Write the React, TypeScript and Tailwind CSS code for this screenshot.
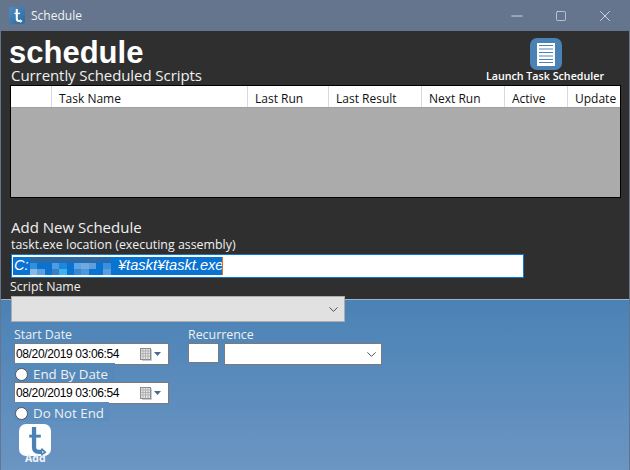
import React from 'react';
import { ChevronDown, Minus, Square, X } from 'lucide-react';

const columns = [
  { name: '', width: 'w-[41px]' },
  { name: 'Task Name', width: 'w-[196px]' },
  { name: 'Last Run', width: 'w-[81px]' },
  { name: 'Last Result', width: 'w-[93px]' },
  { name: 'Next Run', width: 'w-[83px]' },
  { name: 'Active', width: 'w-[63px]' },
  { name: 'Update', width: 'flex-1' },
];

const mosaic = [
  'bg-[#2d6aa8]', 'bg-[#2d6aa8]', 'bg-[#2d6aa8]', 'bg-[#2d6aa8]', 'bg-[#2d6aa8]', 'bg-[#2d6aa8]', 'bg-[#2d6aa8]', 'bg-[#2d6aa8]', 'bg-[#2d6aa8]', 'bg-[#2d6aa8]', 'bg-[#1f6cb8]', 'bg-[#0a72d0]',
  'bg-[#2f8fe0]', 'bg-[#0a72d0]', 'bg-[#0a72d0]', 'bg-[#4a9de6]', 'bg-[#1f86de]', 'bg-[#0a72d0]', 'bg-[#5aa5e6]', 'bg-[#6fa9dd]', 'bg-[#5c9fdc]', 'bg-[#0a72d0]', 'bg-[#3a90de]', 'bg-[#0a72d0]',
  'bg-[#8ab8e6]', 'bg-[#5fa0dc]', 'bg-[#0a72d0]', 'bg-[#3c7fc4]', 'bg-[#3db0ee]', 'bg-[#0a72d0]', 'bg-[#3c87d0]', 'bg-[#4f97dc]', 'bg-[#0a72d0]', 'bg-[#0a72d0]', 'bg-[#5a9ede]', 'bg-[#0a72d0]',
];

const LogoT = ({ color, size }: { color: string; size: number }) => (
  <svg width={size} height={size} viewBox="0 0 32 32" fill="none">
    <path d="M14.500 2v21c0 3.500 2 4.800 5 4.800h3.500" stroke={color} strokeWidth="4.400" />
    <path d="M9.500 11.500h12" stroke={color} strokeWidth="3" />
    <path d="M22 24.500l4 3.500-4 3.200" stroke={color} strokeWidth="1.800" />
  </svg>
);

const DateBox = () => (
  <div className="w-[155px] h-[22px] shrink-0 bg-white border border-[#7a7a7a] flex items-center pl-[1px] pr-[4px]">
    <span className="text-[12px] text-black tracking-[-0.37px] flex-1 font-['Liberation_Sans',sans-serif]">08/20/2019 03:06:54</span>
    <svg width="25" height="14" viewBox="0 0 25 14" fill="none">
      <path d="M12.500 2.500v11H3" stroke="#c4ccd4" />
      <rect x="1.500" y="1.500" width="10" height="11" fill="#e4e4e4" stroke="#8a8a8a" />
      <path d="M1.500 4h10M1.500 6.500h10M1.500 9h10M4 1.500v11M6.500 1.500v11M9 1.500v11" stroke="#a8a8a8" strokeWidth="0.800" />
      <path d="M15 5h7l-3.500 4z" fill="#4a6a90" />
    </svg>
  </div>
);

const RadioRow = ({ label, className }: { label: string; className: string }) => (
  <div className={`${className} relative flex items-center h-[19px] -mt-[2px] pt-[3px] gap-[5px]`}>
    <span className="w-[13px] h-[13px] ml-[1px] rounded-full bg-white border border-[#555]" />
    <span className="text-[13.300px] leading-[16px] text-[#f0f0f0] whitespace-nowrap">{label}</span>
  </div>
);

export default function App() {
  return (
    <div className="w-[630px] h-[470px] overflow-hidden flex flex-col bg-[#65758d] font-['Open_Sans',sans-serif] border-x border-[#65758d]">
      {/* Title bar */}
      <div className="h-[31px] flex items-center shrink-0 pl-[8px]">
        <div className="w-[16px] h-[17px] rounded-[3px] bg-gradient-to-br from-[#4f8cc0] to-[#2b6aa0] flex items-center justify-center">
          <LogoT color="#ffffff" size={15} />
        </div>
        <span className="ml-[6px] text-[12px] text-[#f2f2f2]">Schedule</span>
        <div className="ml-auto flex items-center pr-[15px] text-[#f4f4f4]">
          <Minus size={18} strokeWidth={1} />
          <Square size={12} strokeWidth={1.200} className="ml-[29px]" />
          <X size={18} strokeWidth={1} className="ml-[29px]" />
        </div>
      </div>

      {/* Dark panel */}
      <div className="h-[268px] shrink-0 bg-[#2f2f2f] pl-[9px] pr-[8px] flex flex-col">
        <div className="flex justify-between h-[54px] shrink-0">
          <div>
            <div className="font-['Liberation_Sans',sans-serif] font-bold text-[31px] leading-[30px] mt-[7px] -ml-[1px] text-white">schedule</div>
            <div className="text-[15px] tracking-[-0.07px] leading-[18px] -mt-[2px] ml-[1px] text-[#f0f0f0]">Currently Scheduled Scripts</div>
          </div>
          <div className="flex flex-col items-center mr-[17px] mt-[7px]">
            <div className="w-[32px] h-[32px] ml-[2px] rounded-[7px] bg-[#4a82b6] flex items-center justify-center">
              <div className="w-[18px] h-[23px] bg-white flex flex-col justify-center gap-[2px] px-[2px]">
                <span className="h-[1px] bg-[#4a82b6]" />
                <span className="h-[2px] bg-[#a9c3dc]" />
                <span className="h-[1px] bg-[#4a82b6]" />
                <span className="h-[2px] bg-[#a9c3dc]" />
                <span className="h-[1px] bg-[#4a82b6]" />
                <span className="h-[1px] bg-[#4a82b6]" />
              </div>
            </div>
            <span className="text-[10.700px] leading-[14px] -mt-[1px] font-semibold text-white whitespace-nowrap">Launch Task Scheduler</span>
          </div>
        </div>

        {/* Grid */}
        <div className="w-[611px] h-[113px] shrink-0 border border-black bg-[#ababab]">
          <div className="flex h-[22px] bg-white border-b border-[#a0a0a0]">
            {columns.map((col, i) => (
              <div key={i} className={`${col.width} border-r border-[#d9d9d9] last:border-r-0 pl-[7px] text-[12px] leading-[25px] text-[#111] whitespace-nowrap`}>
                {col.name}
              </div>
            ))}
          </div>
        </div>

        <div className="text-[15px] leading-[20px] mt-[19px] ml-[1px] text-[#f0f0f0]">Add New Schedule</div>
        <div className="text-[12.400px] leading-[16px] text-[#f0f0f0] ml-[1px]">taskt.exe location (executing assembly)</div>

        <div className="w-[513px] h-[24px] shrink-0 mt-[1px] ml-[1px] bg-white border border-[#0a78d7] p-[1px] flex items-center">
          <div className="h-[18px] w-[210px] bg-[#0a72d0] flex items-center italic text-[14.600px] text-white border-r border-[#e07020] overflow-hidden pl-[1px] font-['Liberation_Sans',sans-serif]">
            <span className="w-[16px] shrink-0">C:</span>
            <div className="w-[88px] h-[18px] shrink-0 grid grid-cols-12 grid-rows-3">
              {mosaic.map((c, i) => (
                <span key={i} className={c} />
              ))}
            </div>
            <span className="whitespace-nowrap">¥taskt¥taskt.exe</span>
          </div>
        </div>

        <div className="text-[12.400px] leading-[16px] mt-[1px] text-[#f0f0f0]">Script Name</div>
        <div className="w-[334px] h-[26px] ml-[1px] mt-[1px] shrink-0 relative bg-[#e1e1e1] border border-[#adadad] flex items-center justify-end pr-[3px]">
          <ChevronDown size={15} strokeWidth={1.500} className="text-[#444]" />
        </div>
      </div>

      {/* Blue panel */}
      <div className="flex-1 bg-gradient-to-b from-[#4a82b6] to-[#6b95c2] border-t border-[#9fb4c8] pl-[13px] pt-[27px]">
        <div className="flex">
          <div className="w-[174px] flex flex-col">
            <div className="text-[12.400px] leading-[16px] text-[#f0f0f0]">Start Date</div>
            <DateBox />
            <RadioRow label="End By Date" className="w-[101px] bg-[#5589ba]" />
            <DateBox />
            <RadioRow label="Do Not End" className="w-[95px] bg-[#5b8dbe]" />
            <div className="w-[32px] h-[32px] mt-[3px] ml-[5px] rounded-[7px] bg-white flex items-center justify-center">
              <LogoT color="#4a82b6" size={31} />
            </div>
            <div className="text-[10.500px] leading-[10px] -mt-[3px] ml-[11px] font-bold text-[#f0f4f8]">Add</div>
          </div>
          <div>
            <div className="text-[12.400px] leading-[16px] text-[#f0f0f0]">Recurrence</div>
            <div className="flex gap-[5px]">
              <div className="w-[31px] h-[20px] bg-white border border-[#7a7a7a]" />
              <div className="w-[158px] h-[22px] bg-white border border-[#7a7a7a] flex items-center justify-end pr-[2px]">
                <ChevronDown size={15} strokeWidth={1.500} className="text-[#444]" />
              </div>
            </div>
          </div>
        </div>
      </div>
    </div>
  );
}
